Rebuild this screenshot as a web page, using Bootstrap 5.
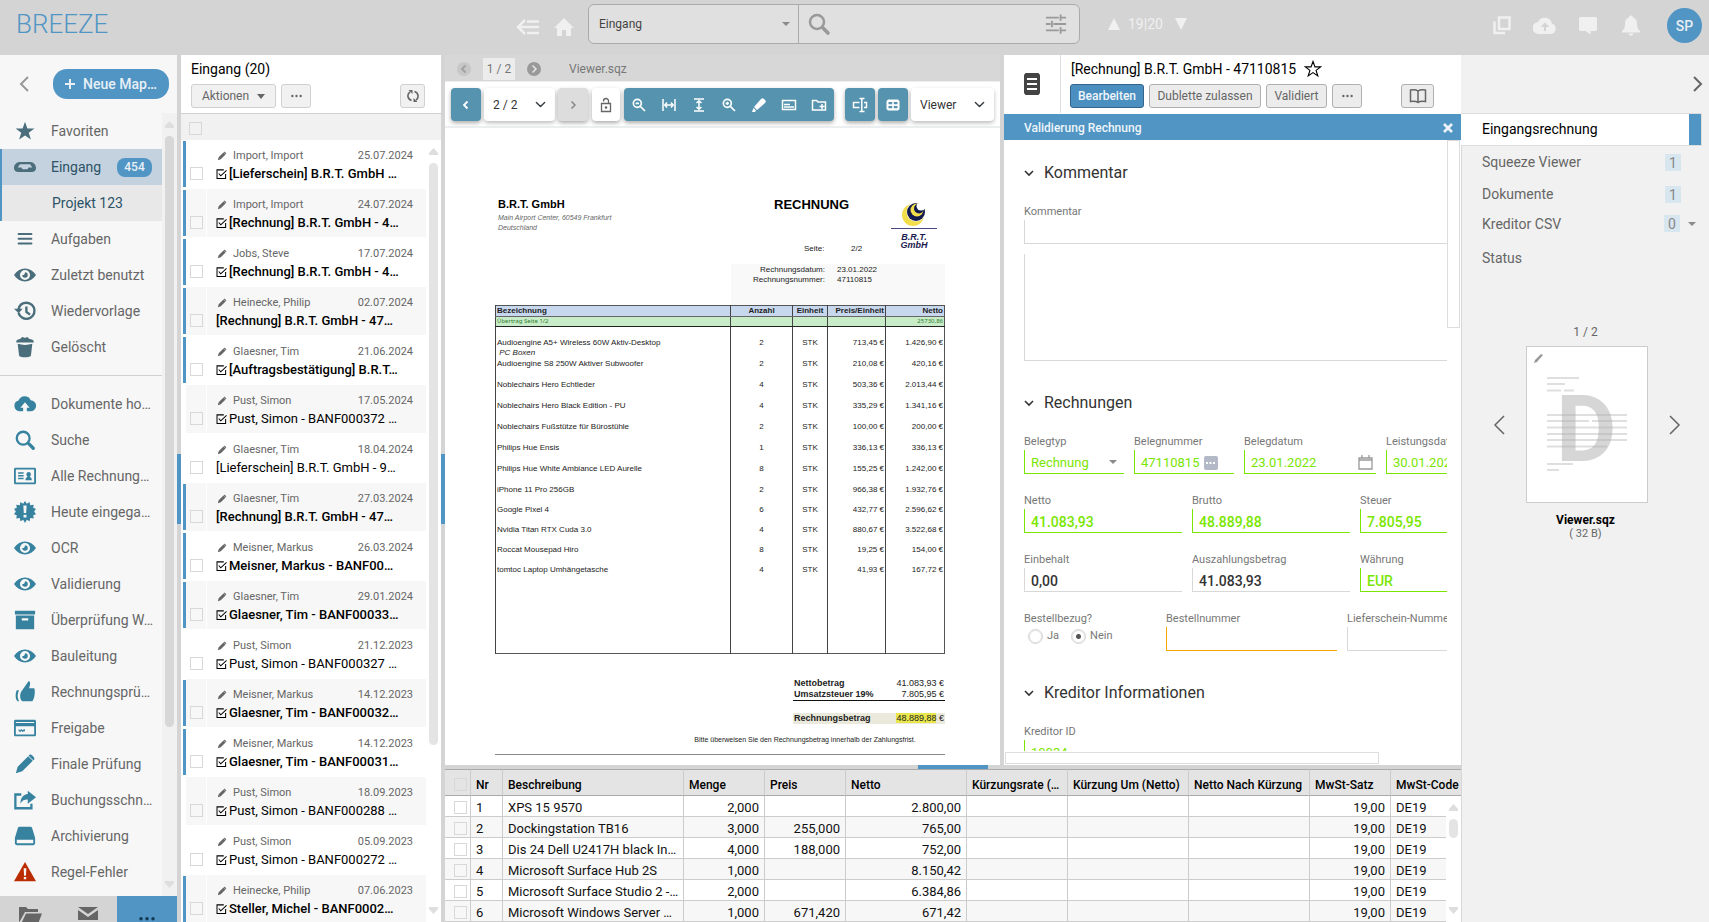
<!DOCTYPE html>
<html lang="de">
<head>
<meta charset="utf-8">
<meta name="viewport" content="width=device-width, initial-scale=1">
<title>BREEZE – Eingang</title>
<link href="https://cdn.jsdelivr.net/npm/bootstrap@5.3.0/dist/css/bootstrap.min.css" rel="stylesheet">
<style>
:root{--blue:#5195c4;--tool:#5593af;--chrome:#d4d4d4;--line:#d8d8d8;--green:#7ae600}
body{font-family:Roboto,"Noto Sans",sans-serif;font-size:14px;line-height:20px;color:#666;background:#fff}
svg{display:block;fill:currentColor;flex:none}
button,select,input,textarea{font-family:inherit}
.i10{width:10px;height:10px}.i12{width:12px;height:12px}.i16{width:16px;height:16px}.i20{width:20px;height:20px}.i24{width:24px;height:24px}
.stroke{fill:none;stroke:currentColor}
.fs11{font-size:11px}.fs12{font-size:12px}
.minw{min-width:0;min-height:0}
.plain{border:0;background:none;padding:0;color:inherit}
/* header */
.topbar{height:55px;background:var(--chrome)}
.topbar-left{width:588px;padding-right:12px}
.top-nav{gap:12px;margin-top:14px}
.logo{font-size:26px;font-weight:300;color:var(--blue);line-height:32px;text-decoration:none}
.top-ico{color:#f0f0f0}
.top-tools{height:51px;gap:19px;padding-right:7px}
.searchbox{width:492px;height:40px;background:#e0e0e0;border:1px solid #aaa;border-radius:6px;overflow:hidden}
.searchbox .form-select{width:210px;height:38px;font-size:12px;color:#444;border-right:1px solid #aaa;background-color:transparent;padding:0 10px;background-image:none}
.searchbox input{background:transparent;color:#444;font-size:12px}
.tri{position:absolute;width:0;height:0;border:4px solid transparent;border-top-color:#8a8a8a;border-bottom:0;pointer-events:none}
.avatar{width:35px;height:35px;border-radius:50%;background:var(--blue);color:#e8eef2;font-weight:500;font-size:14px;margin-left:5px}
/* sidebar */
.side{width:177px;background:#f7f7f7}
.side-head{height:58px}
.newbtn{height:30px;width:116px;border-radius:14px;background:var(--blue);color:#e8f0f6;font-weight:500;font-size:14px}
.snav a{height:36px;color:#666;text-decoration:none;padding:0 0 0 14px;gap:15px;white-space:nowrap;font-size:14px}
.snav svg{width:22px;height:22px}
.grp1 svg{color:#4b6e7c}.grp2 svg{color:#36829f}
.snav a.cur{background:#c4d2df;border-left:2px solid var(--blue);padding-left:12px;color:#2c5366}
.snav a.sub{background:#e8e8e8;border-left:2px solid var(--blue);padding-left:50px;color:#2c5366}
.cnt{background:var(--blue);color:#e8f0f6;font-size:12px;font-weight:500;border-radius:8px;width:35px;height:19px;line-height:19px;text-align:center;margin-right:10px}
.side-rule{border-top:1px solid #d0d0d0;margin:10px 0}
.sbar{width:15px;background:#f1f1f1}
.up,.down{width:9px;height:7px;background:#dedede;clip-path:polygon(50% 0,100% 70%,100% 100%,0 100%,0 70%)}
.down{transform:rotate(180deg)}
.thumb{width:9px;border-radius:5px;background:#d7d7d7}
.foot{height:26px;background:var(--chrome);color:#666}
.foot button{border:0;background:none;color:inherit;padding:0}
.foot .act{background:var(--blue);color:#123a52}
/* splitters */
.split{width:4px;background:var(--chrome)}
.split i{width:4px;height:70px;background:var(--blue)}
/* list */
.plist{width:260px;background:#fff}
.plist-head{height:58px;padding:0 8px 0 10px}
.brow{gap:5px;padding-top:5px}
.btn-s{height:24px;border:1px solid #d0d0d0;border-radius:3px;background:#f1f1f1;color:#666;font-size:12px;line-height:20px;padding:0}
.btn-s.dk{border-color:#b0b0b0;background:#ececec}
.btn-s.go{background:#4b8fc0;border-color:#35648a;color:#f0f6fa;font-weight:500}
.cb{appearance:none;width:13px;height:13px;border:1px solid #d8d8d8;background:transparent;margin:0;border-radius:0;flex:none;display:block}
.list-top{height:27px;background:#f1f1f1;border-top:1px solid #d0d0d0}
.it{height:49px;border-left:2px solid #fff}
.it .bar{width:3px;height:46px;margin-top:1px}
.it.u .bar{background:var(--blue)}
.it .ck{width:20px;height:48px;padding:27px 0 0 4px}
.it .tx{height:48px;width:219px;margin-left:1px;padding:7px 13px 0 9px;white-space:nowrap}
.it:nth-child(even) .ck,.it:nth-child(even) .tx{background:#f7f7f7}
.it .m{font-size:11px;line-height:18px;color:#666}
.it .t{font-size:13px;line-height:18px;color:#000}
.it.u .t{font-weight:500}
.it .t svg{width:11px;height:12px;margin-right:2px}
.it .m svg{width:10px;height:10px;margin:0 6px 0 1px}
.list-bar{width:15px}
.list-bar .thumb{background:#e4e4e4}
/* viewer */
.vhead{height:26px;background:#d7d7d7;color:#777;font-size:12px;padding:1px 0 0 12px;gap:12px}
.vhead .pg{background:#ececec;height:22px;width:32px}
.circ{width:14px;height:14px;border-radius:50%;background:#999;border:0;padding:0;color:#e4e4e4}
.vtools{height:47px;border-bottom:2px solid #eceff0;padding:7px 6px 0;box-shadow:inset 0 1px #eee}
.tb{height:33px;border:0;border-radius:4px;padding:0;width:30px;background:var(--tool);color:#fff;box-shadow:0 2px 4px #0005}
.tb.w{background:#fff;color:#666}
.tb.off{background:#ddd;color:#888}
.vtools .form-select{height:33px;border:0;border-radius:4px;font-size:12px;color:#333;background-color:#fff;box-shadow:0 2px 4px #0004;padding:0 24px 0 9px;background-size:11px;background-position:right 9px center}
.tgroup{background:var(--tool);height:33px;width:210px;border-radius:4px;box-shadow:0 2px 4px #0005}
.tgroup button{border:0;background:none;color:#fff;padding:0;width:30px;height:33px}
/* invoice */
.paper{font-family:"Liberation Sans",Arial,sans-serif;font-size:8px;line-height:10px;color:#222;width:450px;margin:70px 55px 0 50px}
.paper .hd{height:108px}
.paper .co{font-size:11px;line-height:12px;font-weight:700;color:#000}
.paper .adr{font-size:7px;font-style:italic;color:#666;margin:3px 0 0}
.paper .ti{font-size:13px;font-weight:700;color:#000;line-height:14px}
.paper .pgno{margin-top:32px;padding-left:30px}
.meta{background:#f9f9f9;width:214px;height:41px;margin-top:-42px;padding-top:1px}
.meta .k{width:94px;text-align:right}
.inv{table-layout:fixed;border-collapse:collapse;border:1px solid #555;width:450px}
.inv td,.inv th{border-left:1px solid #444;padding:0 1px;height:20px;vertical-align:top;line-height:10px;overflow:hidden;white-space:nowrap}
.inv th{background:#c6d7ee;height:11px;border-bottom:1px solid #666;text-align:center}
.inv .tr td{background:#c8ecc8;height:10px;border-bottom:1px solid #222;color:#2c7d2c;font-family:"Noto Sans",sans-serif;font-size:6px;line-height:9px}
.inv td:nth-child(2),.inv td:nth-child(3){text-align:center}
.inv td:nth-child(4),.inv td:nth-child(5),.inv th:nth-child(n+4){text-align:right}
.inv .r21 td{height:21px}
.inv .first td{height:32px;padding-top:11px}
.inv .last td{height:89px}
.sums{width:152px;font-size:9px;line-height:11px}
.sums>div{padding:0 1px}
.sums .net{border-bottom:1px solid #111}
.sums .total{margin-top:12px;background:#ebe9dc}
.mk{background:#e8e64a}
.terms{font-size:7px;border-bottom:1px solid #888;padding:3px 0 9px 170px;margin-top:8px;white-space:nowrap}
/* form */
.fpane{width:457px}
.fico{width:57px;border-right:1px solid #ddd;color:#444}
.ftitle{padding:4px 0 0 1px}
.fbar{height:26px;background:var(--blue);color:#eef5fa;font-size:12px;font-weight:500;padding:1px 7px 0 20px;margin-top:1px}
.fbody{padding:17px 0 0 20px;width:443px;height:611px;overflow:hidden}
.fbody h2{font-size:16px;line-height:32px;font-weight:400;color:#333;margin:0 0 15px;gap:10px}
.fbody h2.nx{margin-top:26px}
.fl label,.fl .lb{display:block;font-size:11px;line-height:16px;color:#777;white-space:nowrap}
.fl{position:relative;flex:none}
.frow{display:flex;gap:10px;margin-bottom:19px;width:640px}
.fi{display:block;appearance:none;height:24px;width:100%;border:0;border-left:1px solid var(--line);border-bottom:1px solid var(--line);border-radius:0;background:#fff;padding:2px 6px 0;font-size:13px;color:#333;outline:0}
.fi.b{font-weight:500;font-size:14px}
textarea.fi{height:107px;margin-top:10px;resize:none}
.fi.g{border-color:var(--green);color:var(--green)}
.fi.o{border-color:#f5a800}
.rads{padding:1px 0 0 4px;gap:4px}
.rad{appearance:none;width:15px;height:15px;border:1px solid #d4d4d4;box-shadow:inset 0 0 0 1px #e4e4e4;border-radius:50%;margin:0;background:#fff}
.rad:checked{background:radial-gradient(#555 0 2px,#fff 3px)}
.vscroll{width:13px;height:188px;border:1px solid #ddd}
.hscroll{width:374px;height:12px;border:1px solid #ddd;margin:1px 0 1px 1px}
/* positions grid */
.gsplit{height:4px;background:var(--chrome);padding-left:473px}
.gsplit i{display:block;width:70px;height:4px;background:var(--blue)}
.gridbox{height:153px;overflow:hidden;position:relative}
.pos{table-layout:fixed;width:100%;border-collapse:separate;border-spacing:0;font-size:13px;color:#111;margin:0}
.pos th{height:27px;background:#e4e4e4;border-top:1px solid #aaa;border-bottom:1px solid #aaa;border-right:1px solid #ccc;font-size:12px;font-weight:500;color:#000;padding:4px 4px 0 5px;line-height:20px;white-space:nowrap;overflow:hidden;text-overflow:ellipsis}
.pos td{height:21px;line-height:17px;border-right:1px solid #ccc;border-bottom:1px solid #ccc;padding:3px 2px 0 5px;white-space:nowrap;overflow:hidden;text-overflow:ellipsis}
.pos tr:nth-child(even) td{background:#f7f7f7}
.pos td.n{text-align:right;padding-right:5px}
.pos .cb{margin-left:4px}
.pos th:last-child,.pos td:last-child{border-right:0;padding-right:0}
.gbar{position:absolute;right:0;top:27px;bottom:0;width:15px;background:#fff}
.gbar .thumb{background:#e4e4e4;height:19px}
/* right */
.rpane{width:248px;background:#f1f1f1}
.rsel{height:33px;width:241px;border:1px solid #ddd;border-left:0;background:#fff;color:#000;padding-left:21px}
.rsel span{margin-top:-2px}
.rsel i{width:12px;height:31px;background:var(--blue)}
.rnav{border-left:1px solid #d8d8d8}
.rnav a{color:#666;text-decoration:none;height:32px;padding:0 28px 0 20px}
.rnav a.sh{height:27px;padding-right:29px}
.rnav a.st{margin-top:5px}
.rb{width:16px;height:17px;background:#d8e6f0;color:#888;text-align:center;line-height:18px}
.pcount{margin-top:45px;padding:3px 0}
.pvrow{gap:20px;margin-top:1px;padding-left:2px}
.pv{width:122px;height:157px;background:#fff;border:1px solid #ccc}
.pname{font-size:12px;line-height:16px;margin-top:9px}
</style>
</head>
<body class="vh-100 overflow-hidden d-flex flex-column">
<svg width="0" height="0" class="position-absolute" aria-hidden="true">
<symbol id="star" viewBox="0 0 24 24"><path d="M12 2l2.600 7.200h7.600l-6.100 4.600 2.300 7.400L12 16.800l-6.400 4.400 2.300-7.400L1.800 9.200h7.600z"/></symbol>
<symbol id="tray" viewBox="0 0 24 24"><path fill-rule="evenodd" d="M6 6.500h12c3.500 0 6 3.500 6 6.500s-2 4.500-4.500 4.500h-15C2 17.500 0 16 0 13s2.500-6.500 6-6.500zM6.500 9L4 12.500h4c.5 0 1 2 1.500 2h5c.5 0 1-2 1.500-2h4L17.500 9z"/></symbol>
<symbol id="lines" viewBox="0 0 24 24"><path fill="none" stroke="currentColor" stroke-width="2.200" stroke-linecap="round" d="M5 6.500h14M5 11.800h14M5 17h14"/></symbol>
<symbol id="eye" viewBox="0 0 24 24"><path fill-rule="evenodd" d="M0 12C3 7.500 7 5 12 5s9 2.500 12 7c-3 4.500-7 7-12 7S3 16.500 0 12zm12-5.500a5.500 5.500 0 100 11 5.500 5.500 0 000-11zm0 2.500a3 3 0 11-3 3c1 .5 3-.5 3-3z"/></symbol>
<symbol id="hist" viewBox="0 0 24 24"><path fill="none" stroke="currentColor" stroke-width="2.600" d="M5 14a8.800 8.800 0 108.700-11C9.500 3 6 5.500 5 10M13.500 7v6l4 3"/><path d="M0 9.500h9.500L5 14.500z"/></symbol>
<symbol id="bin" viewBox="0 0 24 24"><path d="M2.500 5.500C4 3 7 4 8 2c1-2 3 0 4 0s3-2 4 .5c1 1.500 4 .5 5.500 3V7h-19zM4 8.500c5 1.600 11 1.600 16 0L18.500 21c0 3-13 3-13 0z"/></symbol>
<symbol id="cloud" viewBox="0 0 24 24"><path fill-rule="evenodd" d="M6 20a6 6 0 01-1-11.800A7 7 0 0118.200 8 6 6 0 0118 20h-4v-4h3L12 10l-5 6h3v4z"/></symbol>
<symbol id="lens" viewBox="0 0 24 24"><path fill="none" stroke="currentColor" stroke-width="2.500" d="M10 3a7 7 0 100 14 7 7 0 000-14z"/><path fill="none" stroke="currentColor" stroke-width="3.600" stroke-linecap="round" d="M16 16l5 5"/></symbol>
<symbol id="idc" viewBox="0 0 24 24"><path fill-rule="evenodd" d="M2 3h20c1.500 0 2 .5 2 2v14c0 1.500-.5 2-2 2H2c-1.500 0-2-.5-2-2V5c0-1.500.5-2 2-2zm0 2v14h20V5zM4.500 8h6v1.600h-6zm0 3h6v1.600h-6zm0 3h6v1.600h-6zM16 7.500c3 0 3 4 1.200 5 .3 1 2.300 1 2.300 4h-7c0-3 2-3 2.300-4-1.800-1-1.800-5 1.200-5z"/></symbol>
<symbol id="alert" viewBox="0 0 24 24"><path fill-rule="evenodd" d="M12 0l2 3 3-2 .7 3.500 3.800-.5-.5 3.500 3 1-2 3 2 3-3 1 .5 3.500-3.800-.5L17 22l-3-1.500L12 24l-2-3.500L7 22l-.7-3.500-3.800.5.500-3.500-3-1 2-3-2-3 3-1L2.500 4l3.800.5L7 1l3 2zm-1.800 5l.5 8h2.600l.5-8zm.2 10v3h3.200v-3z"/></symbol>
<symbol id="box" viewBox="0 0 24 24"><path fill-rule="evenodd" d="M1 2h22v4H1zm1 5h20v15H2zm6.500 3v2.500h7V10z"/></symbol>
<symbol id="thumbup" viewBox="0 0 24 24"><path d="M9 10l7-10c3 1 1 6 .5 8H22c1.500 2 .5 12-2 14H9c-3-2-3-9 0-12zM3 10h2.500c-2 4-2 8 0 12H4C1 20 1.500 13 3 10z"/></symbol>
<symbol id="cardi" viewBox="0 0 24 24"><path fill-rule="evenodd" d="M2 3h20c1.500 0 2 .5 2 2v14c0 1.500-.5 2-2 2H2c-1.500 0-2-.5-2-2V5c0-1.500.5-2 2-2zm0 2.500v1h20v-1zM2 10v9h20v-9zm3 3l1.500 1.500L8 13l1.500 1.500L11 13l1 1v2l-1-1-1.500 1.500L8 15l-1.500 1.500L5 15z"/></symbol>
<symbol id="pen" viewBox="0 0 24 24"><path d="M2 22l2-7L15.500 3.500l5 5L9 20zM17 2c1.500-1.500 6.500 3.500 5 5l-1 1-5-5z"/></symbol>
<symbol id="share" viewBox="0 0 24 24"><path d="M15 2l9 7-9 7v-4.500c-4 0-6 1-8 4.500 0-6 3-10 8-10.500z"/><path fill="none" stroke="currentColor" stroke-width="2.500" d="M8 6H1.500v15H19v-5"/></symbol>
<symbol id="disk" viewBox="0 0 24 24"><path fill-rule="evenodd" d="M6 2h12c1 0 2 1 2 2l3 10v6c0 1-1 2-2 2H3c-1 0-2-1-2-2v-6L4 4c0-1 1-2 2-2zM3 16v4h18v-4z"/></symbol>
<symbol id="warn" viewBox="0 0 24 24"><path fill="#bb2d00" d="M12 1l12 21H0z"/><path fill="#f7f7f7" d="M10.500 8h3l-.5 8h-2zm.2 9.500h2.600V20h-2.600z"/></symbol>
<symbol id="chk" viewBox="0 0 12 12"><path fill="none" stroke="currentColor" stroke-width="1.100" d="M10.500 6v4.900H1.100V1.500h7.400M3 5.500l2.200 2.500L11.500 2"/></symbol>
<symbol id="zo" viewBox="0 0 24 24"><path fill="none" stroke="currentColor" stroke-width="2.500" d="M9.500 3.500a6 6 0 100 12 6 6 0 000-12zM14 14l7 7M7 9.500h5"/></symbol>
<symbol id="chr" viewBox="0 0 10 10"><path fill="none" stroke="currentColor" stroke-width="1.500" d="M3.500 1.500L7 5 3.500 8.500"/></symbol>
<symbol id="chl" viewBox="0 0 10 10"><path fill="none" stroke="currentColor" stroke-width="1.800" d="M6.500 1.500L3 5l3.500 3.500"/></symbol>
<symbol id="chd" viewBox="0 0 10 10"><path fill="none" stroke="currentColor" stroke-width="1.600" d="M1 3l4 4 4-4"/></symbol>
<symbol id="dots" viewBox="0 0 12 4"><circle cx="1.500" cy="2" r="1.300"/><circle cx="6" cy="2" r="1.300"/><circle cx="10.500" cy="2" r="1.300"/></symbol>
</svg>

<header class="topbar d-flex align-items-start flex-shrink-0">
  <div class="topbar-left d-flex flex-shrink-0">
    <a class="logo ms-3 mt-2" href="#">BREEZE</a>
    <div class="d-flex ms-auto top-ico top-nav">
      <button class="plain" aria-label="Menü"><svg width="24" height="20" viewBox="0 0 24 20"><path class="stroke" stroke-width="2.500" d="M9 3l-7 7 7 7M3 10h20M11 4.500h12M11 16h12"/></svg></button>
      <button class="plain" aria-label="Start"><svg width="24" height="20" viewBox="0 0 24 20"><path d="M12 1L2 11h3v8h5v-6h4v6h5v-8h3z"/></svg></button>
    </div>
  </div>
  <div class="searchbox d-flex align-items-center position-relative mt-1 flex-shrink-0">
    <select class="form-select border-top-0 border-bottom-0 border-start-0 rounded-0" aria-label="Bereich"><option>Eingang</option></select>
    <span class="tri" style="left:193px;top:17px"></span>
    <svg width="24" height="24" class="ms-2" style="color:#999"><use href="#lens"/></svg>
    <input class="border-0 flex-grow-1 minw" type="search" aria-label="Suche">
    <button class="plain me-2 pe-1" style="color:#999" aria-label="Filter"><svg width="22" height="24" viewBox="0 0 24 24"><path class="stroke" stroke-width="2" d="M1 5h14M18 5h5M17 1.500v7M1 12h5M9 12h14M7.500 8.500v7M1 19h14M18 19h5M17 15.500v7"/></svg></button>
  </div>
  <div class="d-flex align-items-center gap-2 top-ico ms-4 ps-1" style="height:47px">
    <svg width="12" height="12" viewBox="0 0 12 12"><path d="M6 0l6 12H0z"/></svg><span>19|20</span><svg width="12" height="12" class="ms-1" viewBox="0 0 12 12"><path d="M6 12L0 0h12z"/></svg>
  </div>
  <div class="d-flex align-items-center top-ico top-tools ms-auto">
    <button class="plain" aria-label="Kopieren"><svg class="i24" viewBox="0 0 24 24"><path class="stroke" stroke-width="2.500" d="M9 3.500h10.500V15H9zM4.500 7.500V19H15"/></svg></button>
    <button class="plain" aria-label="Hochladen"><svg class="i24" viewBox="0 0 24 24"><path fill-rule="evenodd" d="M6 20a6 6 0 01-1-12 7.500 7.500 0 0114 1.500A5.500 5.500 0 0118.500 20zm6-11.500L7.500 13H11v4h2v-4h3.500z"/></svg></button>
    <button class="plain" aria-label="Nachrichten"><svg class="i24" viewBox="0 0 24 24"><path d="M5 3h14c1.500 0 2 .5 2 2v10c0 1.500-.5 2-2 2h-4.500v3.500L9.500 17H5c-1.500 0-2-.5-2-2V5c0-1.500.5-2 2-2z"/></svg></button>
    <button class="plain" aria-label="Benachrichtigungen"><svg class="i24" viewBox="0 0 24 24"><path d="M12 1.500c1.500 0 2 1 2 2 3 1 4 3 4 7 0 3 1 5 3 6.500v1.500H3V17c2-1.500 3-3.500 3-6.500 0-4 1-6 4-7 0-1 .5-2 2-2zM9.500 19.500h5c-.5 3-4.500 3-5 0z"/></svg></button>
    <button class="plain avatar">SP</button>
  </div>
</header>

<div class="d-flex flex-grow-1 minw">
<!-- navigation -->
<aside class="side d-flex flex-column flex-shrink-0">
  <div class="side-head d-flex align-items-center ps-3 pe-2 flex-shrink-0">
    <button class="plain" aria-label="Zurück"><svg width="18" height="18" viewBox="0 0 18 18" style="color:#999"><path class="stroke" stroke-width="2" d="M12 2L5 9l7 7"/></svg></button>
    <button class="newbtn border-0 ms-auto p-0 text-nowrap d-flex align-items-center justify-content-center gap-2"><svg class="i10" viewBox="0 0 10 10"><path class="stroke" stroke-width="2" d="M5 0v10M0 5h10"/></svg>Neue Map…</button>
  </div>
  <div class="d-flex flex-grow-1 minw overflow-hidden">
    <nav class="snav flex-grow-1 overflow-hidden">
      <div class="grp1">
      <a class="d-flex align-items-center" href="#"><svg><use href="#star"/></svg>Favoriten</a>
      <a class="d-flex align-items-center cur" href="#"><svg><use href="#tray"/></svg>Eingang<span class="cnt ms-auto">454</span></a>
      <a class="d-flex align-items-center sub" href="#">Projekt 123</a>
      <a class="d-flex align-items-center" href="#"><svg><use href="#lines"/></svg>Aufgaben</a>
      <a class="d-flex align-items-center" href="#"><svg><use href="#eye"/></svg>Zuletzt benutzt</a>
      <a class="d-flex align-items-center" href="#"><svg><use href="#hist"/></svg>Wiedervorlage</a>
      <a class="d-flex align-items-center" href="#"><svg><use href="#bin"/></svg>Gelöscht</a>
      </div>
      <div class="side-rule"></div>
      <div class="grp2">
      <a class="d-flex align-items-center" href="#"><svg><use href="#cloud"/></svg>Dokumente ho…</a>
      <a class="d-flex align-items-center" href="#"><svg><use href="#lens"/></svg>Suche</a>
      <a class="d-flex align-items-center" href="#"><svg><use href="#idc"/></svg>Alle Rechnung…</a>
      <a class="d-flex align-items-center" href="#"><svg><use href="#alert"/></svg>Heute eingega…</a>
      <a class="d-flex align-items-center" href="#"><svg><use href="#eye"/></svg>OCR</a>
      <a class="d-flex align-items-center" href="#"><svg><use href="#eye"/></svg>Validierung</a>
      <a class="d-flex align-items-center" href="#"><svg><use href="#box"/></svg>Überprüfung W…</a>
      <a class="d-flex align-items-center" href="#"><svg><use href="#eye"/></svg>Bauleitung</a>
      <a class="d-flex align-items-center" href="#"><svg><use href="#thumbup"/></svg>Rechnungsprü…</a>
      <a class="d-flex align-items-center" href="#"><svg><use href="#cardi"/></svg>Freigabe</a>
      <a class="d-flex align-items-center" href="#"><svg><use href="#pen"/></svg>Finale Prüfung</a>
      <a class="d-flex align-items-center" href="#"><svg><use href="#share"/></svg>Buchungsschn…</a>
      <a class="d-flex align-items-center" href="#"><svg><use href="#disk"/></svg>Archivierung</a>
      <a class="d-flex align-items-center" href="#"><svg><use href="#warn"/></svg>Regel-Fehler</a>
      </div>
    </nav>
    <div class="sbar d-flex flex-column align-items-center py-2 flex-shrink-0"><div class="up"></div><div class="thumb mt-2" style="height:77%"></div><div class="down mt-auto"></div></div>
  </div>
  <div class="foot d-flex flex-shrink-0 overflow-hidden">
    <button class="flex-fill d-flex justify-content-center pt-2" aria-label="Ordner"><svg width="24" height="20" viewBox="0 0 24 20"><path d="M1 3h7l2 2h10v3H7L2 17 1 18zM8 9.500h16L20 20H3z"/></svg></button>
    <button class="flex-fill d-flex justify-content-center pt-2" aria-label="Post"><svg width="22" height="20" viewBox="0 0 22 20"><path d="M1 3h20l-10 7zM1 6l10 7 10-7v10H1z"/></svg></button>
    <button class="act d-flex justify-content-center pt-3" style="width:60px" aria-label="Mehr"><svg width="16" height="12" viewBox="0 -3 12 9"><use href="#dots" width="12" height="4"/></svg></button>
  </div>
</aside>
<div class="split d-flex align-items-center flex-shrink-0"><i></i></div>

<!-- folder list -->
<section class="plist d-flex flex-column flex-shrink-0">
  <div class="plist-head flex-shrink-0">
    <div class="text-black pt-1">Eingang (20)</div>
    <div class="d-flex brow">
      <button class="btn-s d-flex align-items-center justify-content-center gap-2" style="width:85px">Aktionen<svg width="8" height="5" viewBox="0 0 8 5"><path d="M0 0h8L4 5z"/></svg></button>
      <button class="btn-s d-flex align-items-center justify-content-center" style="width:30px" aria-label="Mehr"><svg width="11" height="4"><use href="#dots"/></svg></button>
      <button class="btn-s ms-auto me-2 d-flex align-items-center justify-content-center" style="width:25px" aria-label="Aktualisieren"><svg class="i12" viewBox="0 0 12 12"><path class="stroke" stroke-width="1.600" d="M4.500 10.500C0 9 0 4 3 2M7.500 1.500C12 3 12 8 9 10"/><path d="M1.500 0h4v4zM10.500 12h-4V8z"/></svg></button>
    </div>
  </div>
  <div class="list-top ps-2 pt-2 flex-shrink-0"><input class="cb" type="checkbox" aria-label="Alle auswählen"></div>
  <div class="d-flex flex-grow-1 minw overflow-hidden">
  <div class="flex-grow-1">
    <div class="it u d-flex"><div class="bar"></div><div class="ck"><input class="cb" type="checkbox" aria-label="Auswahl"></div><div class="tx"><div class="m d-flex align-items-center"><svg><use href="#pen"/></svg>Import, Import<span class="ms-auto">25.07.2024</span></div><div class="t d-flex align-items-center"><svg><use href="#chk"/></svg>[Lieferschein] B.R.T. GmbH …</div></div></div>
    <div class="it u d-flex"><div class="bar"></div><div class="ck"><input class="cb" type="checkbox" aria-label="Auswahl"></div><div class="tx"><div class="m d-flex align-items-center"><svg><use href="#pen"/></svg>Import, Import<span class="ms-auto">24.07.2024</span></div><div class="t d-flex align-items-center"><svg><use href="#chk"/></svg>[Rechnung] B.R.T. GmbH - 4…</div></div></div>
    <div class="it u d-flex"><div class="bar"></div><div class="ck"><input class="cb" type="checkbox" aria-label="Auswahl"></div><div class="tx"><div class="m d-flex align-items-center"><svg><use href="#pen"/></svg>Jobs, Steve<span class="ms-auto">17.07.2024</span></div><div class="t d-flex align-items-center"><svg><use href="#chk"/></svg>[Rechnung] B.R.T. GmbH - 4…</div></div></div>
    <div class="it u d-flex"><div class="bar"></div><div class="ck"><input class="cb" type="checkbox" aria-label="Auswahl"></div><div class="tx"><div class="m d-flex align-items-center"><svg><use href="#pen"/></svg>Heinecke, Philip<span class="ms-auto">02.07.2024</span></div><div class="t">[Rechnung] B.R.T. GmbH - 47…</div></div></div>
    <div class="it u d-flex"><div class="bar"></div><div class="ck"><input class="cb" type="checkbox" aria-label="Auswahl"></div><div class="tx"><div class="m d-flex align-items-center"><svg><use href="#pen"/></svg>Glaesner, Tim<span class="ms-auto">21.06.2024</span></div><div class="t d-flex align-items-center"><svg><use href="#chk"/></svg>[Auftragsbestätigung] B.R.T…</div></div></div>
    <div class="it d-flex"><div class="bar"></div><div class="ck"><input class="cb" type="checkbox" aria-label="Auswahl"></div><div class="tx"><div class="m d-flex align-items-center"><svg><use href="#pen"/></svg>Pust, Simon<span class="ms-auto">17.05.2024</span></div><div class="t d-flex align-items-center"><svg><use href="#chk"/></svg>Pust, Simon - BANF000372 …</div></div></div>
    <div class="it d-flex"><div class="bar"></div><div class="ck"><input class="cb" type="checkbox" aria-label="Auswahl"></div><div class="tx"><div class="m d-flex align-items-center"><svg><use href="#pen"/></svg>Glaesner, Tim<span class="ms-auto">18.04.2024</span></div><div class="t">[Lieferschein] B.R.T. GmbH - 9…</div></div></div>
    <div class="it u d-flex"><div class="bar"></div><div class="ck"><input class="cb" type="checkbox" aria-label="Auswahl"></div><div class="tx"><div class="m d-flex align-items-center"><svg><use href="#pen"/></svg>Glaesner, Tim<span class="ms-auto">27.03.2024</span></div><div class="t">[Rechnung] B.R.T. GmbH - 47…</div></div></div>
    <div class="it u d-flex"><div class="bar"></div><div class="ck"><input class="cb" type="checkbox" aria-label="Auswahl"></div><div class="tx"><div class="m d-flex align-items-center"><svg><use href="#pen"/></svg>Meisner, Markus<span class="ms-auto">26.03.2024</span></div><div class="t d-flex align-items-center"><svg><use href="#chk"/></svg>Meisner, Markus - BANF00…</div></div></div>
    <div class="it u d-flex"><div class="bar"></div><div class="ck"><input class="cb" type="checkbox" aria-label="Auswahl"></div><div class="tx"><div class="m d-flex align-items-center"><svg><use href="#pen"/></svg>Glaesner, Tim<span class="ms-auto">29.01.2024</span></div><div class="t d-flex align-items-center"><svg><use href="#chk"/></svg>Glaesner, Tim - BANF00033…</div></div></div>
    <div class="it d-flex"><div class="bar"></div><div class="ck"><input class="cb" type="checkbox" aria-label="Auswahl"></div><div class="tx"><div class="m d-flex align-items-center"><svg><use href="#pen"/></svg>Pust, Simon<span class="ms-auto">21.12.2023</span></div><div class="t d-flex align-items-center"><svg><use href="#chk"/></svg>Pust, Simon - BANF000327 …</div></div></div>
    <div class="it u d-flex"><div class="bar"></div><div class="ck"><input class="cb" type="checkbox" aria-label="Auswahl"></div><div class="tx"><div class="m d-flex align-items-center"><svg><use href="#pen"/></svg>Meisner, Markus<span class="ms-auto">14.12.2023</span></div><div class="t d-flex align-items-center"><svg><use href="#chk"/></svg>Glaesner, Tim - BANF00032…</div></div></div>
    <div class="it u d-flex"><div class="bar"></div><div class="ck"><input class="cb" type="checkbox" aria-label="Auswahl"></div><div class="tx"><div class="m d-flex align-items-center"><svg><use href="#pen"/></svg>Meisner, Markus<span class="ms-auto">14.12.2023</span></div><div class="t d-flex align-items-center"><svg><use href="#chk"/></svg>Glaesner, Tim - BANF00031…</div></div></div>
    <div class="it d-flex"><div class="bar"></div><div class="ck"><input class="cb" type="checkbox" aria-label="Auswahl"></div><div class="tx"><div class="m d-flex align-items-center"><svg><use href="#pen"/></svg>Pust, Simon<span class="ms-auto">18.09.2023</span></div><div class="t d-flex align-items-center"><svg><use href="#chk"/></svg>Pust, Simon - BANF000288 …</div></div></div>
    <div class="it d-flex"><div class="bar"></div><div class="ck"><input class="cb" type="checkbox" aria-label="Auswahl"></div><div class="tx"><div class="m d-flex align-items-center"><svg><use href="#pen"/></svg>Pust, Simon<span class="ms-auto">05.09.2023</span></div><div class="t d-flex align-items-center"><svg><use href="#chk"/></svg>Pust, Simon - BANF000272 …</div></div></div>
    <div class="it u d-flex"><div class="bar"></div><div class="ck"><input class="cb" type="checkbox" aria-label="Auswahl"></div><div class="tx"><div class="m d-flex align-items-center"><svg><use href="#pen"/></svg>Heinecke, Philip<span class="ms-auto">07.06.2023</span></div><div class="t d-flex align-items-center"><svg><use href="#chk"/></svg>Steller, Michel - BANF0002…</div></div></div>
  </div>
  <div class="list-bar d-flex flex-column align-items-center py-2 flex-shrink-0"><div class="up"></div><div class="thumb mt-2" style="height:76%"></div><div class="down mt-auto"></div></div>
  </div>
</section>
<div class="split d-flex align-items-center flex-shrink-0"><i></i></div>

<!-- document, form and positions -->
<main class="d-flex flex-column flex-grow-1 minw">
<div class="d-flex flex-grow-1 minw">
  <section class="flex-grow-1 minw overflow-hidden bg-white">
    <div class="vhead d-flex align-items-center">
      <button class="circ opacity-25 d-flex align-items-center justify-content-center" style="color:#000" aria-label="Zurück"><svg class="i10"><use href="#chl"/></svg></button>
      <span class="pg d-flex align-items-center justify-content-center">1 / 2</span>
      <button class="circ d-flex align-items-center justify-content-center" aria-label="Weiter"><svg class="i10"><use href="#chr"/></svg></button>
      <span class="ms-3">Viewer.sqz</span>
    </div>
    <div class="vtools d-flex">
      <button class="tb d-flex align-items-center justify-content-center" aria-label="Vorige Seite"><svg class="i10"><use href="#chl"/></svg></button>
      <select class="form-select flex-shrink-0" style="width:71px;margin:0 3px" aria-label="Seite"><option>2 / 2</option></select>
      <button class="tb off d-flex align-items-center justify-content-center" aria-label="Nächste Seite"><svg class="i10"><use href="#chr"/></svg></button>
      <button class="tb w mx-1 d-flex align-items-center justify-content-center" style="width:28px" aria-label="Sperre"><svg class="i16" viewBox="0 0 16 16"><path class="stroke" stroke-width="1.300" d="M3.500 6.500h9v8h-9zM5.500 4.500V4a2.500 2.500 0 015 0v2.500"/><circle cx="8" cy="10.500" r="1.300"/></svg></button>
      <div class="tgroup d-flex flex-shrink-0">
        <button class="d-flex align-items-center justify-content-center" aria-label="Verkleinern"><svg class="i16" viewBox="0 0 24 24"><use href="#zo"/></svg></button>
        <button class="d-flex align-items-center justify-content-center" aria-label="Breite"><svg class="i16" viewBox="0 0 16 16"><path class="stroke" stroke-width="1.500" d="M2 2v12M14 2v12M4 8h8M6 5.500L3.800 8 6 10.500M10 5.500L12.200 8 10 10.500"/></svg></button>
        <button class="d-flex align-items-center justify-content-center" aria-label="Höhe"><svg class="i16" viewBox="0 0 16 16"><path class="stroke" stroke-width="1.500" d="M3 2h10M3 14h10M8 4v8M5.500 6L8 3.800 10.500 6M5.500 10L8 12.200l2.500-2.200"/></svg></button>
        <button class="d-flex align-items-center justify-content-center" aria-label="Vergrößern"><svg class="i16" viewBox="0 0 24 24"><use href="#zo"/><path d="M8.500 7h2v5h-2z"/></svg></button>
        <button class="d-flex align-items-center justify-content-center" aria-label="Marker"><svg class="i16" viewBox="0 0 16 16"><path d="M1 15l1.500-4L5 13.500 4 15zM3 10l7-8c1-1 2-1 3 0l1 1c1 1 1 2 0 3l-8 7z"/></svg></button>
        <button class="d-flex align-items-center justify-content-center" aria-label="Notiz"><svg class="i16" viewBox="0 0 16 16"><path class="stroke" stroke-width="1.500" d="M1.500 3.500h13v9h-13zM3 7.500h6M3 10h10"/></svg></button>
        <button class="d-flex align-items-center justify-content-center" aria-label="Ordner"><svg class="i16" viewBox="0 0 16 16"><path class="stroke" stroke-width="1.500" d="M1.500 13V3.500h4l1.500 1.500h7.500v8zM11 7v5M8.500 9.500h5"/></svg></button>
      </div>
      <button class="tb ms-auto d-flex align-items-center justify-content-center flex-shrink-0" aria-label="Text"><svg class="i16" viewBox="0 0 16 16"><path class="stroke" stroke-width="1.500" d="M7.500 5.500h-6v5h6M12 5.500h2.500v5H12M9.800 1.500v13M7.500 1.500h5M7.500 14.500h5"/></svg></button>
      <button class="tb d-flex align-items-center justify-content-center flex-shrink-0" style="margin:0 3px" aria-label="Tabelle"><svg class="i16" viewBox="0 0 16 16"><path fill-rule="evenodd" d="M3 2.500h10l1.500 1.500v8L13 13.500H3L1.500 12V4zM3.500 5v2.200h3.700V5zm5.300 0v2.200h3.700V5zM3.500 9v2.200h3.700V9zm5.300 0v2.200h3.700V9z"/></svg></button>
      <select class="form-select flex-shrink-0" style="width:83px" aria-label="Ansicht"><option>Viewer</option></select>
    </div>
    <article class="paper">
      <div class="hd d-flex">
        <div style="width:279px;padding-left:3px"><div class="co">B.R.T. GmbH</div><p class="adr">Main Airport Center, 60549 Frankfurt<br>Deutschland</p></div>
        <div class="flex-grow-1"><div class="ti">RECHNUNG</div><div class="d-flex pgno"><span style="width:47px">Seite:</span><span>2/2</span></div></div>
        <svg width="46" height="52" viewBox="0 0 46 52" class="me-2 mt-1"><circle cx="22" cy="13" r="11" fill="#f2dd4a"/><circle cx="25" cy="10" r="9.500" fill="#fff"/><circle cx="25" cy="10" r="9" fill="#141a4e"/><circle cx="26" cy="8" r="6.500" fill="#f2dd4a"/><circle cx="28" cy="6.500" r="5" fill="#141a4e"/><circle cx="30" cy="4" r="4.500" fill="#fff"/><path d="M0 26.500h46" stroke="#4a4a80"/><text x="23" y="38" text-anchor="middle" font-family="Liberation Sans" font-weight="700" font-style="italic" font-size="9" fill="#1c1c50">B.R.T.</text><text x="23" y="46" text-anchor="middle" font-family="Liberation Sans" font-weight="700" font-style="italic" font-size="9" fill="#1c1c50">GmbH</text></svg>
      </div>
      <div class="meta ms-auto">
        <div class="d-flex gap-2"><span class="k">Rechnungsdatum:</span><span class="ps-1">23.01.2022</span></div>
        <div class="d-flex gap-2"><span class="k">Rechnungsnummer:</span><span class="ps-1">47110815</span></div>
      </div>
      <table class="inv">
        <colgroup><col style="width:235px"><col style="width:62px"><col style="width:35px"><col style="width:58px"><col></colgroup>
        <thead><tr><th class="text-start">Bezeichnung</th><th>Anzahl</th><th>Einheit</th><th>Preis/Einheit</th><th>Netto</th></tr></thead>
        <tbody>
        <tr class="tr"><td>Übertrag Seite 1/2</td><td></td><td></td><td></td><td>25730,86</td></tr>
        <tr class="first"><td>Audioengine A5+ Wireless 60W Aktiv-Desktop<br><i>&nbsp;PC Boxen</i></td><td>2</td><td>STK</td><td>713,45 €</td><td>1.426,90 €</td></tr>
        <tr class="r21"><td>Audioengine S8 250W Aktiver Subwoofer</td><td>2</td><td>STK</td><td>210,08 €</td><td>420,16 €</td></tr>
        <tr class="r21"><td>Noblechairs Hero Echtleder</td><td>4</td><td>STK</td><td>503,36 €</td><td>2.013,44 €</td></tr>
        <tr class="r21"><td>Noblechairs Hero Black Edition - PU</td><td>4</td><td>STK</td><td>335,29 €</td><td>1.341,16 €</td></tr>
        <tr class="r21"><td>Noblechairs Fußstütze für Bürostühle</td><td>2</td><td>STK</td><td>100,00 €</td><td>200,00 €</td></tr>
        <tr class="r21"><td>Philips Hue Ensis</td><td>1</td><td>STK</td><td>336,13 €</td><td>336,13 €</td></tr>
        <tr class="r21"><td>Philips Hue White Ambiance LED Aurelle</td><td>8</td><td>STK</td><td>155,25 €</td><td>1.242,00 €</td></tr>
        <tr><td>iPhone 11 Pro 256GB</td><td>2</td><td>STK</td><td>966,38 €</td><td>1.932,76 €</td></tr>
        <tr><td>Google Pixel 4</td><td>6</td><td>STK</td><td>432,77 €</td><td>2.596,62 €</td></tr>
        <tr><td>Nvidia Titan RTX Cuda 3.0</td><td>4</td><td>STK</td><td>880,67 €</td><td>3.522,68 €</td></tr>
        <tr><td>Roccat Mousepad Hiro</td><td>8</td><td>STK</td><td>19,25 €</td><td>154,00 €</td></tr>
        <tr class="last"><td>tomtoc Laptop Umhängetasche</td><td>4</td><td>STK</td><td>41,93 €</td><td>167,72 €</td></tr>
        </tbody>
      </table>
      <div class="sums ms-auto mt-4">
        <div class="d-flex justify-content-between"><b>Nettobetrag</b><span>41.083,93 €</span></div>
        <div class="d-flex justify-content-between net"><b>Umsatzsteuer 19%</b><span>7.805,95 €</span></div>
        <div class="d-flex justify-content-between total"><b>Rechnungsbetrag</b><span><span class="mk">48.889,88</span> €</span></div>
      </div>
      <div class="terms text-center">Bitte überweisen Sie den Rechnungsbetrag innerhalb der Zahlungsfrist.</div>
    </article>
  </section>
  <div class="split flex-shrink-0"></div>
  <section class="fpane flex-shrink-0 bg-white overflow-hidden">
    <div class="d-flex" style="height:58px">
      <div class="fico d-flex align-items-center justify-content-center"><svg width="18" height="22" viewBox="0 0 18 22"><path fill-rule="evenodd" d="M2.500 0h13L17 2v18l-1.500 2h-13L1 20V2zM4 5v2h10V5zm0 5v2h10v-2zm0 5v2h10v-2z"/></svg></div>
      <div class="flex-grow-1" style="padding-left:9px">
        <div class="text-black ftitle d-flex align-items-center">[Rechnung] B.R.T. GmbH - 47110815<svg class="ms-2" width="18" height="18" viewBox="0 0 24 24"><path class="stroke" stroke-width="1.500" d="M12 2l2.600 7.200h7.600l-6.100 4.600 2.300 7.400L12 16.800l-6.400 4.400 2.300-7.400L1.800 9.200h7.600z"/></svg></div>
        <div class="d-flex brow">
          <button class="btn-s go" style="width:74px">Bearbeiten</button>
          <button class="btn-s dk" style="width:112px">Dublette zulassen</button>
          <button class="btn-s dk" style="width:61px">Validiert</button>
          <button class="btn-s dk d-flex align-items-center justify-content-center" style="width:30px" aria-label="Mehr"><svg width="11" height="4"><use href="#dots"/></svg></button>
          <button class="btn-s dk ms-auto d-flex align-items-center justify-content-center" style="width:33px;margin-right:27px" aria-label="Ansicht"><svg width="18" height="16" viewBox="0 0 18 16"><path class="stroke" stroke-width="1.500" d="M9 3C7 1.500 4 1.500 1.500 2v11.500C4 13 7 13 9 14.500c2-1.500 5-1.500 7.500-1V2C14 1.500 11 1.500 9 3zm0 0v11"/></svg></button>
        </div>
      </div>
    </div>
    <div class="fbar d-flex align-items-center justify-content-between">Validierung Rechnung<button class="plain" aria-label="Schließen"><svg class="i12" viewBox="0 0 12 12"><path class="stroke" stroke-width="2.600" d="M2 2l8 8M10 2l-8 8"/></svg></button></div>
    <div class="d-flex">
    <form class="fbody flex-shrink-0">
      <h2 class="d-flex align-items-center"><svg class="i10"><use href="#chd"/></svg>Kommentar</h2>
      <div class="fl"><label for="k1">Kommentar</label><input id="k1" class="fi"></div>
      <textarea class="fi" aria-label="Kommentartext"></textarea>
      <h2 class="nx d-flex align-items-center"><svg class="i10"><use href="#chd"/></svg>Rechnungen</h2>
      <div class="frow">
        <div class="fl" style="width:100px"><label for="f1">Belegtyp</label><select id="f1" class="fi g"><option>Rechnung</option></select><span class="tri" style="right:7px;top:26px"></span></div>
        <div class="fl" style="width:100px"><label for="f2">Belegnummer</label><input id="f2" class="fi g" value="47110815"><svg class="position-absolute" style="right:16px;top:22px" width="14" height="14" viewBox="0 0 14 14"><rect width="14" height="14" rx="2" fill="#b4b9c8"/><path fill="#fff" d="M2 6h2v2H2zm3.500 0h2v2h-2zM9 6h2v2H9z"/></svg></div>
        <div class="fl" style="width:132px"><label for="f3">Belegdatum</label><input id="f3" class="fi g" value="23.01.2022"><svg class="position-absolute" style="right:3px;top:21px;color:#999" width="15" height="15" viewBox="0 0 15 15"><path class="stroke" stroke-width="1.300" d="M1 3h13v11H1zM1 5h13M4 0v3M11 0v3"/></svg></div>
        <div class="fl" style="width:132px"><label for="f4">Leistungsdatum</label><input id="f4" class="fi g" value="30.01.2022"></div>
      </div>
      <div class="frow">
        <div class="fl" style="width:158px"><label for="f5">Netto</label><input id="f5" class="fi g b" value="41.083,93"></div>
        <div class="fl" style="width:158px"><label for="f6">Brutto</label><input id="f6" class="fi g b" value="48.889,88"></div>
        <div class="fl" style="width:158px"><label for="f7">Steuer</label><input id="f7" class="fi g b" value="7.805,95"></div>
      </div>
      <div class="frow">
        <div class="fl" style="width:158px"><label for="f8">Einbehalt</label><input id="f8" class="fi b" value="0,00"></div>
        <div class="fl" style="width:158px"><label for="f9">Auszahlungsbetrag</label><input id="f9" class="fi b" value="41.083,93"></div>
        <div class="fl" style="width:158px"><label for="f10">Währung</label><input id="f10" class="fi g b" value="EUR"></div>
      </div>
      <div class="frow mb-0">
        <div class="fl" style="width:132px"><span class="lb">Bestellbezug?</span><div class="d-flex align-items-center rads"><input class="rad" type="radio" name="bz" id="r1"><label for="r1" class="me-2">Ja</label><input class="rad" type="radio" name="bz" id="r2" checked><label for="r2">Nein</label></div></div>
        <div class="fl" style="width:171px"><label for="f11">Bestellnummer</label><input id="f11" class="fi o"></div>
        <div class="fl" style="width:171px"><label for="f12">Lieferschein-Nummer</label><input id="f12" class="fi"></div>
      </div>
      <h2 class="nx d-flex align-items-center"><svg class="i10"><use href="#chd"/></svg>Kreditor Informationen</h2>
      <div class="fl" style="width:158px"><label for="f13">Kreditor ID</label><input id="f13" class="fi g" value="10034"></div>
    </form>
    <div class="vscroll"></div>
    </div>
    <div class="hscroll"></div>
  </section>
</div>
<div class="gsplit flex-shrink-0"><i></i></div>
<div class="gridbox flex-shrink-0">
  <table class="pos">
    <colgroup><col style="width:26px"><col style="width:32px"><col style="width:181px"><col style="width:81px"><col style="width:81px"><col style="width:121px"><col style="width:101px"><col style="width:121px"><col style="width:121px"><col style="width:81px"><col></colgroup>
    <thead><tr><th><input class="cb" type="checkbox" aria-label="Alle"></th><th>Nr</th><th>Beschreibung</th><th>Menge</th><th>Preis</th><th>Netto</th><th>Kürzungsrate (…</th><th>Kürzung Um (Netto)</th><th>Netto Nach Kürzung</th><th>MwSt-Satz</th><th>MwSt-Code</th></tr></thead>
    <tbody>
    <tr><td><input class="cb" type="checkbox" aria-label="Zeile 1"></td><td>1</td><td>XPS 15 9570</td><td class="n">2,000</td><td class="n"></td><td class="n">2.800,00</td><td></td><td></td><td></td><td class="n">19,00</td><td>DE19</td></tr>
    <tr><td><input class="cb" type="checkbox" aria-label="Zeile 2"></td><td>2</td><td>Dockingstation TB16</td><td class="n">3,000</td><td class="n">255,000</td><td class="n">765,00</td><td></td><td></td><td></td><td class="n">19,00</td><td>DE19</td></tr>
    <tr><td><input class="cb" type="checkbox" aria-label="Zeile 3"></td><td>3</td><td>Dis 24 Dell U2417H black In…</td><td class="n">4,000</td><td class="n">188,000</td><td class="n">752,00</td><td></td><td></td><td></td><td class="n">19,00</td><td>DE19</td></tr>
    <tr><td><input class="cb" type="checkbox" aria-label="Zeile 4"></td><td>4</td><td>Microsoft Surface Hub 2S</td><td class="n">1,000</td><td class="n"></td><td class="n">8.150,42</td><td></td><td></td><td></td><td class="n">19,00</td><td>DE19</td></tr>
    <tr><td><input class="cb" type="checkbox" aria-label="Zeile 5"></td><td>5</td><td>Microsoft Surface Studio 2 -…</td><td class="n">2,000</td><td class="n"></td><td class="n">6.384,86</td><td></td><td></td><td></td><td class="n">19,00</td><td>DE19</td></tr>
    <tr><td><input class="cb" type="checkbox" aria-label="Zeile 6"></td><td>6</td><td>Microsoft Windows Server …</td><td class="n">1,000</td><td class="n">671,420</td><td class="n">671,42</td><td></td><td></td><td></td><td class="n">19,00</td><td>DE19</td></tr>
    </tbody>
  </table>
  <div class="gbar d-flex flex-column align-items-center py-2"><div class="up flex-shrink-0"></div><div class="thumb mt-2"></div><div class="down mt-auto"></div></div>
</div>
</main>

<!-- details -->
<aside class="rpane flex-shrink-0 d-flex flex-column">
  <div class="d-flex align-items-center justify-content-end flex-shrink-0" style="height:58px;padding-right:6px"><button class="plain" aria-label="Einklappen"><svg width="12" height="16" viewBox="0 0 12 16"><path class="stroke" stroke-width="2" d="M3 1l7 7-7 7"/></svg></button></div>
  <div class="rsel d-flex align-items-center justify-content-between flex-shrink-0"><span>Eingangsrechnung</span><i></i></div>
  <div class="rnav flex-grow-1">
    <a href="#" class="d-flex align-items-center justify-content-between">Squeeze Viewer<span class="rb">1</span></a>
    <a href="#" class="d-flex align-items-center justify-content-between">Dokumente<span class="rb">1</span></a>
    <a href="#" class="sh d-flex align-items-center justify-content-between position-relative">Kreditor CSV<span class="rb">0</span><span class="tri" style="right:13px;top:12px"></span></a>
    <a href="#" class="st d-flex align-items-center">Status</a>
    <div class="text-center fs12 pcount">1 / 2</div>
    <div class="d-flex align-items-center justify-content-center pvrow">
      <button class="plain" aria-label="Voriges"><svg width="14" height="20" viewBox="0 0 14 20"><path class="stroke" stroke-width="1.500" d="M12 1L3 10l9 9"/></svg></button>
      <div class="pv"><svg width="120" height="155" viewBox="0 0 120 155"><text x="29" y="114" font-family="Roboto" font-weight="700" font-size="93" fill="#d6d6d6">D</text><path d="M20 31h32M20 37h18M20 43.500h14M37 43.500h10M20 68h80M20 74h42M65 74h35M20 80.500h80M20 87h80M20 93h80M20 99.500h60M20 117h26M20 123h12" stroke="#b0b0b0" stroke-opacity=".4" stroke-width="2"/><path d="M7 16l1-3 6-6 2 1-6 7z" fill="#999"/></svg></div>
      <button class="plain" aria-label="Nächstes"><svg width="14" height="20" viewBox="0 0 14 20"><path class="stroke" stroke-width="1.500" d="M2 1l9 9-9 9"/></svg></button>
    </div>
    <div class="text-center pname fw-bold text-black">Viewer.sqz</div>
    <div class="text-center fs11" style="line-height:12px">( 32 B)</div>
  </div>
</aside>
</div>
<script src="https://cdn.jsdelivr.net/npm/bootstrap@5.3.0/dist/js/bootstrap.bundle.min.js"></script>
</body>
</html>
